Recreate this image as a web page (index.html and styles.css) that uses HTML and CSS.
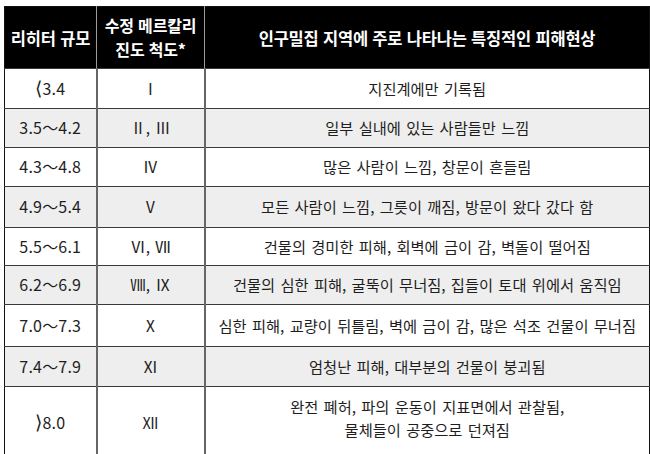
FILE: index.html
```html
<!DOCTYPE html>
<html lang="ko">
<head>
<meta charset="utf-8">
<link rel="stylesheet" href="styles.css">
</head>
<body>
<table class="quake">
  <colgroup>
    <col class="c1"><col class="c2"><col class="c3">
  </colgroup>
  <thead>
    <tr class="head">
      <th>리히터 규모</th>
      <th class="two-line">수정 메르칼리<br>진도 척도*</th>
      <th>인구밀집 지역에 주로 나타나는 특징적인 피해현상</th>
    </tr>
  </thead>
  <tbody>
    <tr class="r1"><td><span class="br">⟨</span>3.4</td><td>Ⅰ</td><td>지진계에만 기록됨</td></tr>
    <tr class="r2 alt"><td>3.5～4.2</td><td>Ⅱ, Ⅲ</td><td>일부 실내에 있는 사람들만 느낌</td></tr>
    <tr class="r3"><td>4.3～4.8</td><td>Ⅳ</td><td>많은 사람이 느낌, 창문이 흔들림</td></tr>
    <tr class="r4 alt"><td>4.9～5.4</td><td>Ⅴ</td><td>모든 사람이 느낌, 그릇이 깨짐, 방문이 왔다 갔다 함</td></tr>
    <tr class="r5"><td>5.5～6.1</td><td>Ⅵ, Ⅶ</td><td>건물의 경미한 피해, 회벽에 금이 감, 벽돌이 떨어짐</td></tr>
    <tr class="r6 alt"><td>6.2～6.9</td><td>Ⅷ, Ⅸ</td><td>건물의 심한 피해, 굴뚝이 무너짐, 집들이 토대 위에서 움직임</td></tr>
    <tr class="r7"><td>7.0～7.3</td><td>Ⅹ</td><td>심한 피해, 교량이 뒤틀림, 벽에 금이 감, 많은 석조 건물이 무너짐</td></tr>
    <tr class="r8 alt"><td>7.4～7.9</td><td>Ⅺ</td><td>엄청난 피해, 대부분의 건물이 붕괴됨</td></tr>
    <tr class="r9"><td><span class="br">⟩</span>8.0</td><td>Ⅻ</td><td class="two">완전 폐허, 파의 운동이 지표면에서 관찰됨,<br>물체들이 공중으로 던져짐</td></tr>
  </tbody>
</table>
</body>
</html>
```
FILE: styles.css
```css
html, body {
  margin: 0;
  padding: 0;
  background: #ffffff;
}
body {
  padding: 6px 0 0 4px;
  font-family: "Noto Sans CJK KR", "Noto Sans", sans-serif;
  color: #1e1e1e;
}
.quake {
  border-collapse: collapse;
  width: 645px;
  table-layout: fixed;
  border: 1px solid #111;
}
.c1 { width: 92px; }
.c2 { width: 108px; }
.c3 { width: 445px; }

.head th {
  background: #000;
  color: #fff;
  font-weight: 700;
  font-size: 16.5px;
  line-height: 24px;
  height: 61px;
  padding: 0;
  text-align: center;
  vertical-align: middle;
  border-left: 1px solid #9a9a9a;
  letter-spacing: -0.2px;
}
.head th:first-child { border-left: none; }
.head th.two-line {
  font-size: 16px;
  line-height: 23.5px;
}

td {
  font-size: 15.3px;
  line-height: 23px;
  text-align: center;
  vertical-align: middle;
  padding: 0 0 1px;
  border-top: 1px solid #3a3a3a;
  border-left: 2px solid #666;
  letter-spacing: 0;
  word-spacing: 1px;
}
td:first-child {
  border-left: none;
  font-size: 16px;
  letter-spacing: 0.2px;
}
.alt td { background: #eeeeee; }

.br {
  font-family: "DejaVu Sans", sans-serif;
  font-size: 19px;
  line-height: 16px;
  font-weight: 300;
}

.r1 td { height: 38px; }
.r2 td { height: 37px; }
.r3 td { height: 37px; }
.r4 td { height: 39px; }
.r5 td { height: 36px; }
.r6 td { height: 37px; }
.r7 td { height: 40px; }
.r8 td { height: 38px; }
.r9 td { height: 70px; }
.r9 td.two { padding-bottom: 10px; height: 61px; }
```
